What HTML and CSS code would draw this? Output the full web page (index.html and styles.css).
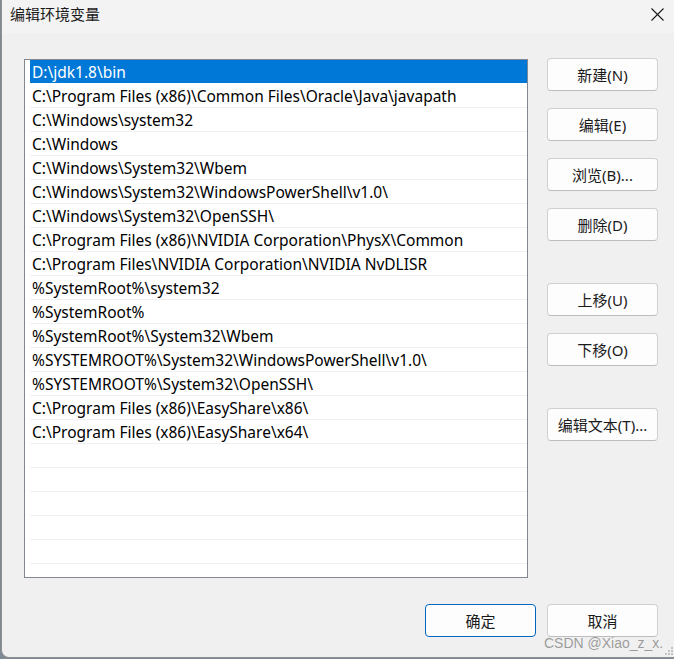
FILE: index.html
```html
<!DOCTYPE html>
<html lang="zh-CN">
<head>
  <meta charset="UTF-8" />
  <title>编辑环境变量</title>
  <link rel="stylesheet" href="styles.css">
</head>
<body>
  <div class="window">
    <div class="titlebar">
      <span class="title">编辑环境变量</span>
      <span class="close">
        <svg width="13" height="13" viewBox="0 0 13 13"><path d="M0.5 0.5 L12.5 12.5 M12.5 0.5 L0.5 12.5" stroke="#1a1a1a" stroke-width="1.1" fill="none"/></svg>
      </span>
    </div>

    <div class="content">
      <div class="list">
        <div class="row selected">D:\jdk1.8\bin</div>
        <div class="row">C:\Program Files (x86)\Common Files\Oracle\Java\javapath</div>
        <div class="row">C:\Windows\system32</div>
        <div class="row">C:\Windows</div>
        <div class="row">C:\Windows\System32\Wbem</div>
        <div class="row">C:\Windows\System32\WindowsPowerShell\v1.0\</div>
        <div class="row">C:\Windows\System32\OpenSSH\</div>
        <div class="row">C:\Program Files (x86)\NVIDIA Corporation\PhysX\Common</div>
        <div class="row">C:\Program Files\NVIDIA Corporation\NVIDIA NvDLISR</div>
        <div class="row">%SystemRoot%\system32</div>
        <div class="row">%SystemRoot%</div>
        <div class="row">%SystemRoot%\System32\Wbem</div>
        <div class="row">%SYSTEMROOT%\System32\WindowsPowerShell\v1.0\</div>
        <div class="row">%SYSTEMROOT%\System32\OpenSSH\</div>
        <div class="row">C:\Program Files (x86)\EasyShare\x86\</div>
        <div class="row">C:\Program Files (x86)\EasyShare\x64\</div>
        <div class="row"></div>
        <div class="row"></div>
        <div class="row"></div>
        <div class="row"></div>
        <div class="row"></div>
      </div>

      <div class="side">
        <div class="group">
          <button class="btn">新建(N)</button>
          <button class="btn">编辑(E)</button>
          <button class="btn">浏览(B)...</button>
          <button class="btn">删除(D)</button>
        </div>
        <div class="group">
          <button class="btn">上移(U)</button>
          <button class="btn">下移(O)</button>
        </div>
        <div class="group">
          <button class="btn">编辑文本(T)...</button>
        </div>
      </div>
    </div>

    <div class="footer">
      <button class="btn primary">确定</button>
      <button class="btn">取消</button>
    </div>

    <div class="watermark">CSDN @Xiao_z_x.</div>
    <svg class="grip" width="10" height="10" viewBox="0 0 10 10">
      <rect x="7" y="1" width="2" height="2" fill="#c4c4c4"/>
      <rect x="4" y="4" width="2" height="2" fill="#c4c4c4"/>
      <rect x="7" y="4" width="2" height="2" fill="#c4c4c4"/>
      <rect x="1" y="7" width="2" height="2" fill="#c4c4c4"/>
      <rect x="4" y="7" width="2" height="2" fill="#c4c4c4"/>
      <rect x="7" y="7" width="2" height="2" fill="#c4c4c4"/>
    </svg>
  </div>
</body>
</html>
```

FILE: styles.css
```css
html, body {
  margin: 0;
  padding: 0;
}
body {
  background: #7f8a96;
  font-family: "Noto Sans", "Noto Sans CJK SC", sans-serif;
  color: #1a1a1a;
}
.window {
  position: relative;
  box-sizing: border-box;
  width: 674px;
  height: 658px;
  margin-left: 1px;
  background: #f0f0f0;
  border-left: 1px solid #8f8f8f;
  border-bottom: 1px solid #8f8f8f;
  border-bottom-left-radius: 8px;
  overflow: hidden;
}
.titlebar {
  height: 33px;
  background: #f3f3f3;
  display: flex;
  align-items: center;
  justify-content: space-between;
  padding: 0 0 0 8px;
}
.title {
  font-family: "Noto Sans CJK SC", sans-serif;
  font-size: 15px;
  margin-top: -6px;
}
.close {
  width: 46px;
  display: flex;
  justify-content: center;
  margin-top: -5px;
  margin-right: -5px;
}
.content {
  display: flex;
  padding: 26px 0 0 22px;
}
.list {
  box-sizing: border-box;
  width: 504px;
  height: 519px;
  background: #fff;
  border: 1px solid #828790;
  padding: 0 0 0 5px;
  overflow: hidden;
}
.row {
  height: 23px;
  line-height: 25px;
  border-bottom: 1px solid #f0f0f0;
  padding-left: 2px;
  font-size: 15.5px;
  white-space: nowrap;
  color: #000;
}
.row.selected {
  background: #0078d7;
  color: #fff;
  border-bottom-color: #fff;
}
.side {
  display: flex;
  flex-direction: column;
  gap: 42px;
  margin-left: 19px;
  margin-top: -1px;
}
.group {
  display: flex;
  flex-direction: column;
  gap: 17px;
}
.btn {
  box-sizing: border-box;
  width: 111px;
  height: 33px;
  background: #fdfdfd;
  border: 1px solid #d0d0d0;
  border-bottom-color: #bdbdbd;
  border-radius: 4px;
  font-family: "Noto Sans", "Noto Sans CJK SC", sans-serif;
  font-size: 15px;
  color: #1a1a1a;
  padding: 0;
}
.btn.primary {
  border: 1px solid #0067c0;
}
.footer {
  display: flex;
  gap: 11px;
  padding: 26px 0 0 423px;
}
.watermark {
  position: absolute;
  left: 542px;
  top: 635px;
  font-family: "Liberation Sans", sans-serif;
  font-size: 14px;
  color: rgba(140, 140, 140, 0.85);
}
.grip {
  position: absolute;
  right: 1px;
  bottom: 1px;
}
```
